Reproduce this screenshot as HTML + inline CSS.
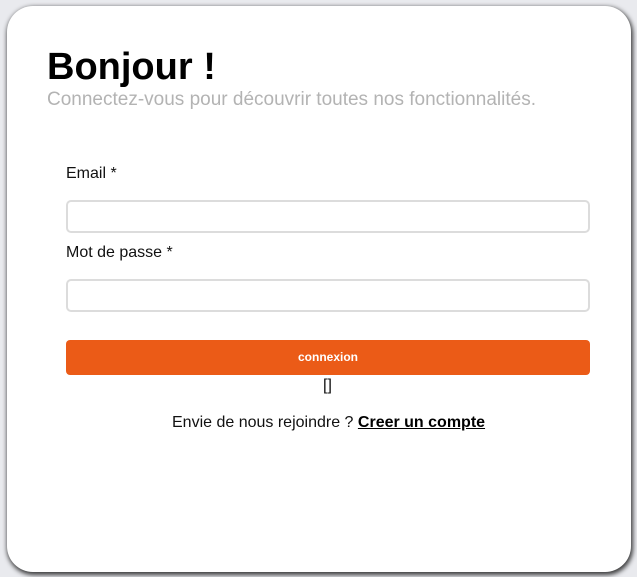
<!DOCTYPE html>
<html><head><meta charset="utf-8"><style>
html,body{margin:0;padding:0;width:637px;height:577px;overflow:hidden;background:#e9eaee;font-family:"Liberation Sans",Arial,sans-serif;}
.card{position:absolute;left:7px;top:6px;width:624px;height:566px;background:#fff;border-radius:26px;box-shadow:1px 2px 5px 1px rgba(0,0,0,.75);}
.abs{position:absolute;white-space:nowrap;}
h1{position:absolute;left:47px;top:45px;margin:0;font-size:38px;font-weight:bold;color:#000;line-height:44px;}
.sub{left:47px;top:89px;font-size:19px;color:#b3b3b3;}
.lab{font-size:16px;color:#111;}
.inp{position:absolute;left:66px;width:520px;height:29px;border:2px solid #dcdcdc;border-radius:5px;background:#fff;}
.btn{position:absolute;left:66px;top:340px;width:524px;height:35px;background:#eb5b17;border-radius:4px;color:#fff;font-size:12px;font-weight:bold;text-align:center;line-height:35px;}
</style></head><body>
<div class="card"></div>
<h1>Bonjour !</h1>
<div class="abs sub">Connectez-vous pour découvrir toutes nos fonctionnalités.</div>
<div class="abs lab" style="left:66px;top:165px;">Email *</div>
<div class="inp" style="top:200px;"></div>
<div class="abs lab" style="left:66px;top:244px;">Mot de passe *</div>
<div class="inp" style="top:279px;"></div>
<div class="btn">connexion</div>
<div class="abs lab" style="left:323px;top:377px;">[]</div>
<div class="abs lab" style="left:172px;top:414px;">Envie de nous rejoindre ? <b style="text-decoration:underline;color:#000">Creer un compte</b></div>
</body></html>
